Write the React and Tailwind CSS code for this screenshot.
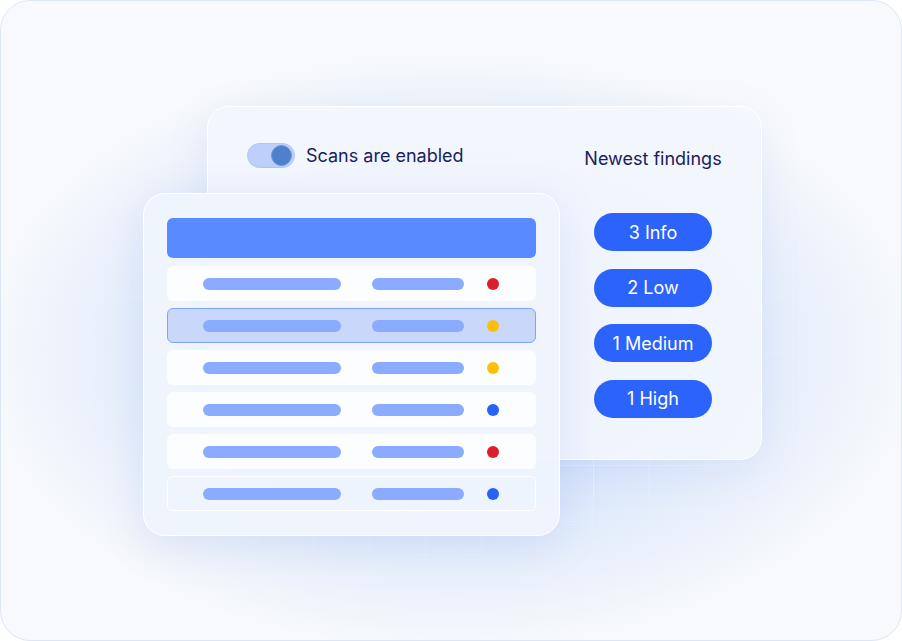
import React from 'react';

const rows = [
  { dot: 'bg-[#dc1f2b]', kind: 'plain' },
  { dot: 'bg-[#fdbf0d]', kind: 'selected' },
  { dot: 'bg-[#fdbf0d]', kind: 'plain' },
  { dot: 'bg-[#2563f7]', kind: 'plain' },
  { dot: 'bg-[#dc1f2b]', kind: 'plain' },
  { dot: 'bg-[#2563f7]', kind: 'ghost' },
];

const findings = ['3 Info', '2 Low', '1 Medium', '1 High'];

const rowStyles = {
  plain: 'bg-[#fcfdff] border border-transparent',
  selected: 'bg-[#c9d8fa] border border-[#7ea3f7]',
  ghost: 'bg-transparent border border-[#ffffff]',
};

const App = () => {
  return (
    <div className="w-[902px] h-[641px] bg-white font-['Inter',sans-serif]">
      <div className="relative w-[902px] h-[641px] rounded-[30px] border border-[#dde6f6] overflow-hidden bg-[#f7f9fc]">
        {/* glow */}
        <div className="absolute inset-0 bg-[radial-gradient(ellipse_470px_300px_at_450px_350px,#c6daFb_0%,#d6e4fb_45%,#e9f0fb_75%,rgba(247,249,252,0)_100%)]" />
        {/* faint grid */}
        <div className="absolute inset-0 opacity-70 bg-[linear-gradient(to_right,rgba(255,255,255,0.55)_1px,transparent_1px),linear-gradient(to_bottom,rgba(255,255,255,0.55)_1px,transparent_1px)] bg-[size:56px_56px] bg-[position:32px_16px] [mask-image:radial-gradient(ellipse_420px_260px_at_450px_360px,black_40%,transparent_100%)]" />

        <div className="relative pl-[206px] pt-[105px]">
          {/* back card */}
          <div className="w-[555px] h-[354px] rounded-[22px] border border-white bg-[#f3f6fd]/90 shadow-[0_10px_40px_rgba(120,150,220,0.12)] flex justify-between pl-[39px] pr-[38px] pt-[36px]">
            <div className="flex items-start gap-[11px]">
              <div className="w-[48px] h-[25px] rounded-full bg-[#bdd0fc] border border-[#b0c6fa] flex items-center justify-end pr-[2px]">
                <div className="w-[21px] h-[21px] rounded-full bg-[#4f80cc] border border-[#6d95d6]" />
              </div>
              <span className="text-[18px] leading-[25px] text-[#18215e]">Scans are enabled</span>
            </div>
            <div className="w-[140px] flex flex-col items-center">
              <span className="text-[18px] leading-[25px] mt-[3px] text-[#18215e]">Newest findings</span>
              <div className="mt-[42px] flex flex-col gap-[17.5px]">
                {findings.map((f) => (
                  <div
                    key={f}
                    className="w-[118px] h-[38px] rounded-full bg-[#2b63fb] text-white text-[18px] flex items-center justify-center"
                  >
                    {f}
                  </div>
                ))}
              </div>
            </div>
          </div>

          {/* front card */}
          <div className="absolute left-[142px] top-[192px] w-[417px] h-[343px] rounded-[22px] border border-white bg-[#eff4fd]/95 shadow-[0_10px_40px_rgba(120,150,220,0.18)] pl-[23px] pr-[23px] pt-[24px]">
            <div className="h-[40px] rounded-[6px] bg-[#5a8aff]" />
            <div className="mt-[8px] flex flex-col gap-[7px]">
              {rows.map((r, i) => (
                <div
                  key={i}
                  className={`h-[35px] rounded-[6px] flex items-center pl-[35px] ${rowStyles[r.kind]}`}
                >
                  <div className="w-[138px] h-[12px] rounded-full bg-[#8aabff]" />
                  <div className="ml-[31px] w-[92px] h-[12px] rounded-full bg-[#8aabff]" />
                  <div className={`ml-[23px] w-[12px] h-[12px] rounded-full ${r.dot}`} />
                </div>
              ))}
            </div>
          </div>
        </div>
      </div>
    </div>
  );
};

export default App;
